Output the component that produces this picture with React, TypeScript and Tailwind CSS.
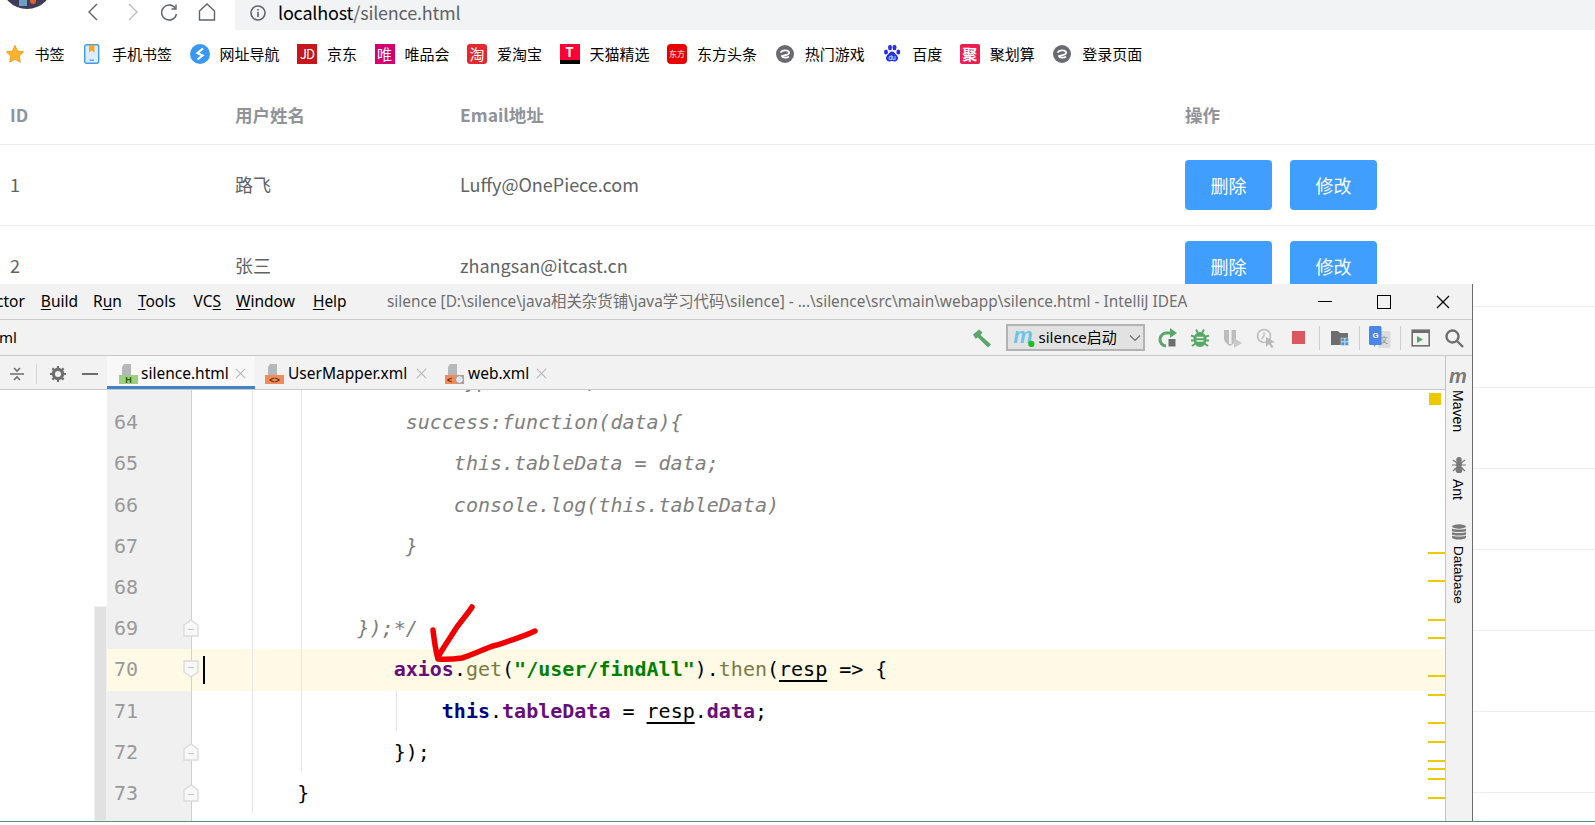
import React from 'react';

const bookmarks = [
  { icon: 'star', label: '书签' },
  { icon: 'phone', label: '手机书签' },
  { icon: 'nav', label: '网址导航' },
  { icon: 'jd', label: '京东' },
  { icon: 'vip', label: '唯品会' },
  { icon: 'tao', label: '爱淘宝' },
  { icon: 'tmall', label: '天猫精选' },
  { icon: 'east', label: '东方头条' },
  { icon: 'e', label: '热门游戏' },
  { icon: 'baidu', label: '百度' },
  { icon: 'ju', label: '聚划算' },
  { icon: 'e', label: '登录页面' },
];

const BookmarkIcon = ({ kind }: { kind: string }) => {
  if (kind === 'star') {
    return <svg viewBox="0 0 20 20" className="w-5 h-5"><path d="M10 1.5l2.6 5.6 6 .8-4.4 4.2 1.1 6.1L10 15.2l-5.3 3 1.1-6.1L1.4 7.9l6-.8z" fill="#fdb32e" stroke="#f0a020" strokeWidth="1" strokeLinejoin="round" /></svg>;
  }
  if (kind === 'phone') {
    return <svg viewBox="0 0 20 20" className="w-5 h-5"><rect x="2.7" y="0.7" width="14" height="18.6" rx="2" fill="#dcecfb" stroke="#3f9bf0" strokeWidth="1.4" /><path d="M7 1h5.5v7.5L9.7 6.5 7 8.5z" fill="#f5a623" /><rect x="7.5" y="15.6" width="4.5" height="1.2" fill="#3f9bf0" /></svg>;
  }
  if (kind === 'nav') {
    return <svg viewBox="0 0 20 20" className="w-5 h-5"><circle cx="10" cy="10" r="10" fill="#3a97f2" /><path d="M13 4.5L7.5 9l5 2.5L7.5 15.5" fill="none" stroke="#fff" strokeWidth="2.2" /></svg>;
  }
  if (kind === 'e') {
    return <svg viewBox="0 0 20 20" className="w-5 h-5"><circle cx="10" cy="10" r="9" fill="#6a6a72" /><path d="M5.5 8.6c1.5-2.6 7-3 8.5-.6.8 1.6-1 2.4-2.6 2.9L7 12.2c.6 1.8 4.5 2 7 .6" fill="none" stroke="#fff" strokeWidth="1.8" /></svg>;
  }
  if (kind === 'baidu') {
    return <svg viewBox="0 0 20 20" className="w-5 h-5"><g fill="#2932e1"><ellipse cx="4" cy="8" rx="2" ry="2.6" /><ellipse cx="8" cy="3.5" rx="2" ry="2.7" /><ellipse cx="12.5" cy="3.5" rx="2" ry="2.7" /><ellipse cx="16.3" cy="8" rx="2" ry="2.6" /><path d="M10 7.5c2.2 0 3 2.2 4.6 3.6 2.5 2.2 1.4 6.4-1.8 6.4-1.2 0-1.8-.5-2.8-.5s-1.6.5-2.8.5c-3.2 0-4.3-4.2-1.8-6.4C7 9.7 7.8 7.5 10 7.5z" /></g><text x="10" y="16" textAnchor="middle" fontSize="6.5" fill="#fff" fontFamily="Liberation Sans">du</text></svg>;
  }
  if (kind === 'jd') {
    return <span className="w-5 h-5 bg-[#c8161d] text-white text-[13px] leading-5 text-center tracking-[-1px]">JD</span>;
  }
  if (kind === 'vip') {
    return <span className="w-5 h-5 bg-[#d4006f] text-white text-[15px] leading-5 text-center">唯</span>;
  }
  if (kind === 'tao') {
    return <span className="w-5 h-5 bg-[#e3282f] rounded-[3px] text-white text-[15px] leading-5 text-center">淘</span>;
  }
  if (kind === 'tmall') {
    return <span className="w-5 h-5 bg-[linear-gradient(#ff0036_80%,#000_80%)] text-white text-[13px] font-bold leading-4 text-center">T</span>;
  }
  if (kind === 'east') {
    return <span className="w-5 h-5 bg-[#e60000] rounded-[4px] text-white text-[8px] leading-5 text-center">东方</span>;
  }
  return <span className="w-5 h-5 bg-[#ee1d4f] rounded-[2px] text-white text-[15px] font-bold leading-5 text-center">聚</span>;
};

const TopBar = () => <div className="flex h-[30px]">
    <svg viewBox="0 0 54 30" className="w-[54px] h-[30px]">
      <circle cx="27" cy="-17" r="26" fill="#3e3c5a" />
      <rect x="19" y="-2" width="8" height="8" fill="#6d9fc2" />
      <circle cx="33" cy="1" r="3" fill="#d8622f" />
    </svg>
    <svg viewBox="0 0 20 20" className="w-5 h-5 mt-[2px] ml-[29px]" fill="none" stroke="#5f6368" strokeWidth="1.4"><path d="M14 2l-8 8 8 8" /></svg>
    <svg viewBox="0 0 20 20" className="w-5 h-5 mt-[2px] ml-[20px]" fill="none" stroke="#bdbdbd" strokeWidth="1.4"><path d="M6 2l8 8-8 8" /></svg>
    <svg viewBox="0 0 20 20" className="w-5 h-5 mt-[2px] ml-[16px]" fill="none" stroke="#5f6368" strokeWidth="1.4"><path d="M16.5 6.5A7.5 7.5 0 1 0 17.5 12" /><path d="M17 2.5v4.5h-4.5" /></svg>
    <svg viewBox="0 0 20 20" className="w-5 h-5 mt-[2px] ml-[18px]" fill="none" stroke="#5f6368" strokeWidth="1.4"><path d="M2.5 9L10 2l7.5 7v9h-15z" /></svg>
    <div className="flex-1 ml-[18px] bg-[#f1f3f4] flex items-center pl-[14px] pb-[5px] text-[18px] tracking-[-0.2px] gap-[11px]">
      <svg viewBox="0 0 18 18" className="w-[18px] h-[18px]" fill="none" stroke="#5f6368" strokeWidth="1.6"><circle cx="9" cy="9" r="7" /><path d="M9 8v5M9 5v1.6" /></svg>
      <span className="text-[#5f6368]"><span className="text-black">localhost</span>/silence.html</span>
    </div>
  </div>;

const BookmarkBar = () => <div className="flex items-center h-[46px] pl-[4.5px] pt-[2px] gap-[17.5px] font-['Noto_Sans_CJK_SC',sans-serif] text-[15px] text-black">
    {bookmarks.map((item, index) => <div key={index} className="flex items-center gap-[10px]">
        <BookmarkIcon kind={item.icon} />
        <span>{item.label}</span>
      </div>)}
  </div>;

const users = [
  { id: 1, name: '路飞', email: 'Luffy@OnePiece.com' },
  { id: 2, name: '张三', email: 'zhangsan@itcast.cn' },
];

const Table = () => <div className="text-[18px] text-[#606266]">
    <div className="grid grid-cols-[235px_225px_725px_1fr] h-[69px] pt-[10px] items-center border-b border-[#ebeef5] font-bold text-[17.5px] text-[#909399]">
      <div className="pl-[10px]">ID</div>
      <div>用户姓名</div>
      <div>Email地址</div>
      <div>操作</div>
    </div>
    {users.map(user => <div key={user.id} className="grid grid-cols-[235px_225px_725px_1fr] h-[81px] items-center border-b border-[#ebeef5]">
        <div className="pl-[10px] pb-[2px]">{user.id}</div>
        <div className="pb-[2px]">{user.name}</div>
        <div className="pb-[2px]">{user.email}</div>
        <div className="flex gap-[18px]">
          <button className="w-[87px] h-[50px] rounded-[4px] bg-[#409eff] text-white">删除</button>
          <button className="w-[87px] h-[50px] rounded-[4px] bg-[#409eff] text-white">修改</button>
        </div>
      </div>)}
    {[0, 1, 2, 3, 4, 5].map(i => <div key={i} className="h-[81px] border-b border-[#ebeef5]" />)}
  </div>;

const Mn = ({ children }: { children: React.ReactNode }) => <span className="underline underline-offset-2">{children}</span>;

const TitleBar = () => <div className="flex items-center h-[36px] border-b border-[#c9c9c9] text-[15.5px] text-black relative">
    <div className="flex gap-[16px]">
      <span className="-ml-[4px]">ctor</span>
      <span><Mn>B</Mn>uild</span>
      <span className="-ml-[1px]">R<Mn>u</Mn>n</span>
      <span><Mn>T</Mn>ools</span>
      <span className="ml-[2px]">VC<Mn>S</Mn></span>
      <span className="-ml-[1px]"><Mn>W</Mn>indow</span>
      <span className="ml-[2px]"><Mn>H</Mn>elp</span>
    </div>
    <span className="absolute left-[387px] text-[15.4px] text-[#6e6e6e] whitespace-nowrap">silence [D:\silence\java相关杂货铺\java学习代码\silence] - ...\silence\src\main\webapp\silence.html - IntelliJ IDEA</span>
    <div className="ml-auto flex items-center pr-[22px]">
      <span className="w-[14px] h-[1.5px] bg-black" />
      <span className="w-[14px] h-[14px] border-[1.5px] border-black ml-[45px]" />
      <svg viewBox="0 0 14 14" className="w-[14px] h-[14px] ml-[45px]" stroke="#000" strokeWidth="1.2"><path d="M1 1l12 12M13 1L1 13" /></svg>
    </div>
  </div>;

const ToolBar = () => <div className="flex items-center h-[36px] border-b border-[#c9c9c9] text-[15px] text-black">
    <span className="-ml-[1px]">ml</span>
    <div className="ml-auto flex items-center pr-[8px]">
      <svg viewBox="0 0 20 20" className="w-5 h-5"><path d="M1 6.5L7 1.5l3.5 3L8.5 7 19 16.5 16 19.5 5.8 9.4 3.6 10.8z" fill="#59a869" /></svg>
      <div className="flex items-center w-[139px] h-[27px] ml-[14px] bg-[#e2e2e2] border-2 border-[#b3b3b3] pl-[5px]">
        <svg viewBox="0 0 26 22" className="w-[24px] h-[20px] shrink-0">
          <text x="0" y="17" fontSize="24" fontWeight="700" fontStyle="italic" fontFamily="Liberation Sans" fill="#6cc5e8">m</text>
          <circle cx="20" cy="17.5" r="3.4" fill="#1ec01e" />
        </svg>
        <span className="ml-[2px]">silence启动</span>
        <svg viewBox="0 0 12 8" className="w-[12px] h-[8px] ml-[12px]" fill="none" stroke="#6e6e6e" strokeWidth="1.2"><path d="M1 1.5l5 5 5-5" /></svg>
      </div>
      <svg viewBox="0 0 20 20" className="w-5 h-5 ml-[13px]">
        <path d="M13 5H9a6.5 6.5 0 0 0-1 13" fill="none" stroke="#59a869" strokeWidth="3" />
        <path d="M12 0l7 5-7 5z" fill="#59a869" />
        <rect x="10.5" y="11" width="7" height="7.5" fill="#6e6e6e" />
      </svg>
      <svg viewBox="0 0 20 20" className="w-5 h-5 ml-[12px]">
        <ellipse cx="10" cy="11.5" rx="6.5" ry="7.5" fill="#59a869" />
        <path d="M6 1.5L8 5M14 1.5L12 5M1 7.5L5 9M19 7.5L15 9M1 12.5h3M19 12.5h-3M2 18l3.5-2.5M18 18l-3.5-2.5" stroke="#59a869" strokeWidth="2" />
        <path d="M6.5 9.5h7M6.5 13h7" stroke="#e9f3ea" strokeWidth="1.6" />
      </svg>
      <svg viewBox="0 0 20 20" className="w-5 h-5 ml-[13px]">
        <path d="M1 2h12v8c0 4-3 6-6 8-3-2-6-4-6-8z" fill="#bdbdbd" />
        <path d="M6 2h2.5v14H6z" fill="#f2f2f2" />
        <path d="M11 10l8 5-8 5z" fill="#c9c9c9" />
      </svg>
      <svg viewBox="0 0 20 20" className="w-5 h-5 ml-[13px]">
        <circle cx="8" cy="8" r="6.5" fill="none" stroke="#bdbdbd" strokeWidth="1.6" />
        <path d="M8 4v4l-2.5 3" fill="none" stroke="#bdbdbd" strokeWidth="1.3" />
        <path d="M10 9l9 5-4 1 2.5 4-2 1-2.5-4-3 3z" fill="#b8b8b8" />
      </svg>
      <span className="w-[13px] h-[13px] bg-[#db5860] ml-[16px] mr-[3.5px]" />
      <span className="w-px h-[24px] bg-[#cfcfcf] ml-[11px]" />
      <svg viewBox="0 0 20 20" className="w-5 h-5 ml-[10px]">
        <path d="M1 3h7l2 2h8v12H1z" fill="#6e6e6e" />
        <path d="M11 10h3.5v3.5H11zM15 10h3.5v3.5H15zM11 14h3.5v3.5H11zM15 14h3.5v3.5H15z" fill="#3e9ad8" stroke="#f2f2f2" strokeWidth="0.5" />
      </svg>
      <span className="w-px h-[24px] bg-[#cfcfcf] ml-[9px]" />
      <svg viewBox="0 0 22 24" className="w-[22px] h-[24px] ml-[9px]">
        <rect x="9" y="5" width="12.5" height="17" rx="1.5" fill="#dcdcdc" />
        <text x="15" y="17" textAnchor="middle" fontSize="8" fill="#8a8a8a" fontFamily="Noto Sans CJK SC">文</text>
        <path d="M1.5 0H11c.8 0 1.5.7 1.5 1.5V19H6.5l-1.5 2V19H1.5C.7 19 0 18.3 0 17.5V1.5C0 .7.7 0 1.5 0z" fill="#4a86e8" />
        <text x="6.5" y="12" textAnchor="middle" fontSize="8" fontWeight="700" fill="#fff" fontFamily="Liberation Sans">G</text>
      </svg>
      <span className="w-px h-[24px] bg-[#cfcfcf] ml-[9px]" />
      <svg viewBox="0 0 20 20" className="w-5 h-5 ml-[10px]">
        <rect x="1.2" y="2.2" width="17" height="15.6" fill="none" stroke="#6e6e6e" strokeWidth="1.6" />
        <rect x="1" y="2" width="17" height="3" fill="#6e6e6e" />
        <path d="M6 8l6 3.5L6 15z" fill="#59a869" />
      </svg>
      <svg viewBox="0 0 20 20" className="w-5 h-5 ml-[13px]" fill="none" stroke="#6e6e6e" strokeWidth="2.4"><circle cx="8.5" cy="8.5" r="6" /><path d="M13 13l6 6" /></svg>
    </div>
  </div>;

const FileIcon = ({ bg, label, color, web }: { bg: string; label: string; color: string; web?: boolean }) => <svg viewBox="0 0 19 20" className="w-[19px] h-[20px] shrink-0">
    <path d="M5 0h7v11H3V3z" fill="#b4b8bc" />
    <rect x="0" y="11" width="19" height="9" fill={bg} />
    <text x={web ? 2 : 9.5} y="19" textAnchor={web ? 'start' : 'middle'} fontSize="9" fontWeight="700" fontFamily="Liberation Sans" fill={color}>{label}</text>
    {web && <circle cx="14.5" cy="15.5" r="4" fill="#dfe4e9" stroke="#8a98a6" />}
  </svg>;

const TabClose = () => <svg viewBox="0 0 12 12" className="w-[11px] h-[11px]" stroke="#b4b4b4" strokeWidth="1.1"><path d="M1 1l10 10M11 1L1 11" /></svg>;

const TabBar = () => <div className="flex h-[34px] border-b border-[#c9c9c9] text-[15.5px] text-black">
    <div className="flex items-center w-[107px] pl-[9px] pt-[2px]">
      <svg viewBox="0 0 16 16" className="w-[16px] h-[16px]" fill="none" stroke="#6e6e6e" strokeWidth="1.6"><path d="M1 8h14M5 2l3 3 3-3M5 14l3-3 3 3" /></svg>
      <span className="w-px h-[20px] bg-[#d5d5d5] ml-[11px]" />
      <svg viewBox="0 0 16 16" className="w-[16px] h-[16px] ml-[13px]"><circle cx="8" cy="8" r="4.6" fill="none" stroke="#6e6e6e" strokeWidth="3.2" /><path d="M8 0v3M8 13v3M0 8h3M13 8h3M2.4 2.4l2 2M11.6 11.6l2 2M13.6 2.4l-2 2M4.4 11.6l-2 2" stroke="#6e6e6e" strokeWidth="2.2" /></svg>
      <span className="w-[16px] h-[2px] bg-[#6e6e6e] ml-[16px]" />
    </div>
    <div className="flex items-center w-[148px] bg-[#f8f8f8] border-b-[3px] border-[#4083c9] pl-[12px] pt-[5px]">
      <FileIcon bg="#9ccf7e" label="H" color="#2e5e20" />
      <span className="ml-[3px]">silence.html</span>
      <span className="ml-[6px]"><TabClose /></span>
    </div>
    <div className="flex items-center w-[180px] pl-[10px] pt-[2px]">
      <FileIcon bg="#f08c5a" label="<>" color="#5a2a10" />
      <span className="ml-[4px]">UserMapper.xml</span>
      <span className="ml-[9px]"><TabClose /></span>
    </div>
    <div className="flex items-center w-[117px] pl-[10px] pt-[2px]">
      <FileIcon bg="#f08c5a" label="<" color="#5a2a10" web />
      <span className="ml-[4px]">web.xml</span>
      <span className="ml-[7px]"><TabClose /></span>
    </div>
  </div>;

const Cm = ({ children }: { children: React.ReactNode }) => <span className="italic text-[#808080]">{children}</span>;
const Pr = ({ children }: { children: React.ReactNode }) => <span className="font-bold text-[#660e7a]">{children}</span>;
const Fn = ({ children }: { children: React.ReactNode }) => <span className="text-[#7a7a43]">{children}</span>;
const Kw = ({ children }: { children: React.ReactNode }) => <span className="font-bold text-[#000080]">{children}</span>;
const Str = ({ children }: { children: React.ReactNode }) => <span className="font-bold text-[#008000]">{children}</span>;
const Ul = ({ children }: { children: React.ReactNode }) => <span className="underline underline-offset-4 [text-decoration-skip-ink:none]">{children}</span>;

const lines: { n: number; fold?: 'up' | 'down'; code: React.ReactNode }[] = [
  { n: 63, code: <Cm>{'                 dataType:"text",'}</Cm> },
  { n: 64, code: <Cm>{'                 success:function(data){'}</Cm> },
  { n: 65, code: <Cm>{'                     this.tableData = data;'}</Cm> },
  { n: 66, code: <Cm>{'                     console.log(this.tableData)'}</Cm> },
  { n: 67, code: <Cm>{'                 }'}</Cm> },
  { n: 68, code: '' },
  { n: 69, fold: 'up', code: <Cm>{'             });*/'}</Cm> },
  {
    n: 70,
    fold: 'down',
    code: <>{'                '}<Pr>axios</Pr>.<Fn>get</Fn>(<Str>"/user/findAll"</Str>).<Fn>then</Fn>(<Ul>resp</Ul>{' => {'}</>,
  },
  {
    n: 71,
    code: <>{'                    '}<Kw>this</Kw>.<Pr>tableData</Pr>{' = '}<Ul>resp</Ul>.<Pr>data</Pr>;</>,
  },
  { n: 72, fold: 'up', code: '                });' },
  { n: 73, fold: 'up', code: '        }' },
];

const marks = [552, 580, 619, 637, 675, 694, 722, 741, 760, 768, 778, 797];

const FoldMark = ({ dir }: { dir: 'up' | 'down' }) => <svg viewBox="0 0 16 18" className="absolute -right-[8px] top-[11px] w-[16px] h-[18px]">
    <path d={dir === 'up' ? 'M8 1l7 5v11H1V6z' : 'M1 1h14v11l-7 5-7-5z'} fill="#f8f8f8" stroke="#dadada" strokeWidth="1.4" />
    <path d={dir === 'up' ? 'M5 10.5h6' : 'M5 7.5h6'} stroke="#c4c4c4" strokeWidth="1" />
  </svg>;

const Editor = () => <div className="relative flex-1 overflow-hidden bg-white font-['DejaVu_Sans_Mono',monospace] text-[20px] text-black">
    <div className="-mt-[29px]">
      {lines.map(line => <div key={line.n} className={line.n === 70 ? 'relative flex h-[41.2px] bg-[#fffae5]' : 'relative flex h-[41.2px]'}>
          <div className={line.n === 70 ? 'relative w-[85px] border-r border-[#d0d0d0] leading-[41px] pl-[7px] text-[#999999]' : 'relative w-[85px] bg-[#f0f0f0] border-r border-[#d0d0d0] leading-[41px] pl-[7px] text-[#999999]'}>
            {line.n}
            {line.fold && <FoldMark dir={line.fold} />}
          </div>
          <div className="pl-[9px] leading-[41px] whitespace-pre">{line.code}</div>
          {line.n === 70 && <span className="absolute left-[96px] top-[7px] w-[2px] h-[28px] bg-black" />}
        </div>)}
      <div className="w-[85px] h-[41px] bg-[#f0f0f0] border-r border-[#d0d0d0]" />
    </div>
    <span className="absolute left-[145px] top-0 w-px h-[423px] bg-[#e6e6e6]" />
    <span className="absolute left-[194px] top-0 w-px h-[381px] bg-[#e6e6e6]" />
    <span className="absolute left-[289px] top-[300px] w-px h-[41px] bg-[#e6e6e6]" />
    <span className="absolute right-[4px] top-[3px] w-[12px] h-[12px] bg-[#edc900]" />
    {marks.map(y => <span key={y} className="absolute right-0 w-[17px] h-[2px] bg-[#edc900]" style={{ top: y - 390 }} />)}
  </div>;

const SideBar = () => <div className="flex flex-col items-center w-[27px] border-l border-[#c4c4c4] font-['Liberation_Sans',sans-serif] text-[14px] text-black">
    <svg viewBox="0 0 20 14" className="w-[20px] h-[14px] mt-[14px] shrink-0">
      <text x="0" y="13" fontSize="20" fontWeight="700" fontStyle="italic" fontFamily="Liberation Sans" fill="#7a7a7a">m</text>
    </svg>
    <span className="mt-[6px] -ml-[3px] [writing-mode:vertical-rl]">Maven</span>
    <svg viewBox="0 0 14 16" className="w-[14px] h-[16px] mt-[25px] shrink-0" stroke="#7a7a7a" strokeWidth="1.2">
      <ellipse cx="7" cy="3" rx="2.2" ry="2.4" fill="#7a7a7a" />
      <ellipse cx="7" cy="7.5" rx="2.4" ry="2.4" fill="#7a7a7a" />
      <ellipse cx="7" cy="12.5" rx="3" ry="3.2" fill="#7a7a7a" />
      <path d="M1 3l4 3M13 3L9 6M0 8h4M14 8h-4M1 14l3-3M13 14l-3-3" />
    </svg>
    <span className="mt-[6px] -ml-[3px] [writing-mode:vertical-rl]">Ant</span>
    <svg viewBox="0 0 16 16" className="w-[16px] h-[16px] mt-[24px] shrink-0" fill="#7a7a7a">
      <ellipse cx="8" cy="2.5" rx="7" ry="2.2" />
      <path d="M1 4.6c1 1.3 13 1.3 14 0v2.3c-1 1.5-13 1.5-14 0zM1 8.1c1 1.3 13 1.3 14 0v2.3c-1 1.5-13 1.5-14 0zM1 11.6c1 1.3 13 1.3 14 0v1.9c-1 2.8-13 2.8-14 0z" />
    </svg>
    <span className="mt-[6px] -ml-[3px] text-[13.5px] [writing-mode:vertical-rl]">Database</span>
  </div>;

const IdeWindow = () => <div className="absolute left-0 top-[284px] w-[1473px] h-[537px] flex flex-col bg-[#f2f2f2] border-r border-[#6b6b6b] font-['Noto_Sans','Noto_Sans_CJK_SC',sans-serif]">
    <TitleBar />
    <ToolBar />
    <div className="flex flex-1 min-h-0">
      <div className="flex flex-col flex-1 min-w-0">
        <TabBar />
        <div className="flex flex-1 min-h-0">
          <div className="w-[107px] bg-white pl-[94px] pt-[216px]">
            <div className="w-[13px] h-full bg-[#e1e1e1] border border-[#f0f0f0]" />
          </div>
          <Editor />
        </div>
      </div>
      <SideBar />
    </div>
  </div>;

const App = () => <div className="relative w-[1595px] h-[825px] overflow-hidden bg-white font-['Noto_Sans_CJK_SC','Noto_Sans',sans-serif]">
    <TopBar />
    <BookmarkBar />
    <Table />
    <IdeWindow />
    <div className="absolute left-0 right-0 top-[821px] h-px bg-[#5e8f7e]" />
    <div className="absolute left-0 right-0 top-[822px] h-[3px] bg-white" />
    <svg viewBox="0 0 120 70" className="absolute left-[425px] top-[600px] w-[120px] h-[70px]" fill="none" stroke="#f00000" strokeWidth="5.5" strokeLinecap="round" strokeLinejoin="round">
      <path d="M47 7C42 15 35 22 30 30C25 38 18 48 13 57" />
      <path d="M8 30C9 38 10 48 13 59C22 60 30 59 37 58C50 54 62 47 72 45C84 41 100 36 110 31" />
    </svg>
  </div>;

export default App;
